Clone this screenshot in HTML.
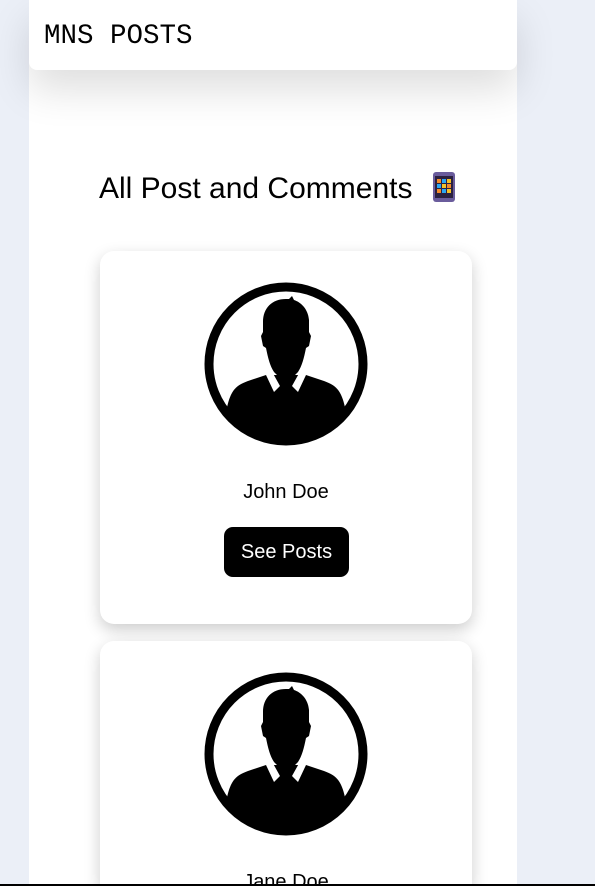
<!DOCTYPE html>
<html><head><meta charset="utf-8"><style>
*{margin:0;padding:0;box-sizing:border-box}
html,body{width:595px;height:886px;overflow:hidden;background:#ebeff7;font-family:"Liberation Sans",sans-serif;position:relative}
.main{position:absolute;left:29px;top:0;width:488px;height:886px;background:#fff}
.hdr{position:absolute;left:29px;top:0;width:488px;height:70px;background:#fff;border-radius:0 0 8px 8px;box-shadow:0 20px 40px rgba(0,0,0,0.13)}
.hdr span{position:absolute;left:15px;top:21px;font-family:"Liberation Mono",monospace;font-size:27.5px;color:#000}
h1{position:absolute;left:99px;top:172px;font-weight:normal;font-size:30px;color:#000;white-space:nowrap}
.card{position:absolute;left:100px;width:372px;height:373px;background:#fff;border-radius:14px;box-shadow:0 6px 16px rgba(0,0,0,0.2);overflow:hidden}
.av{position:absolute;left:104px;top:31px}
.nm{position:absolute;left:0;width:372px;top:230px;text-align:center;font-size:20px}
.btn{position:absolute;left:124px;top:276px;width:125px;height:50px;background:#000;color:#fff;border-radius:9px;font-size:20px;text-align:center;line-height:50px}
.line{position:absolute;left:0;top:884px;width:595px;height:2px;background:#000}
</style></head><body>
<div class="main"></div>
<div class="hdr"><span>MNS POSTS</span></div>
<h1>All Post and Comments <svg width="22" height="30" viewBox="0 0 22 30" style="vertical-align:-4px;margin-left:12px"><rect x="0" y="0" width="22" height="30" rx="3" fill="#6a5c9c"/><rect x="2" y="4" width="18" height="22" fill="#2b2140"/><rect x="4" y="7" width="4" height="4" fill="#f48b2a"/><rect x="9" y="7" width="4" height="4" fill="#2aa6f4"/><rect x="14" y="7" width="4" height="4" fill="#f4c12a"/><rect x="4" y="12" width="4" height="4" fill="#2aa6f4"/><rect x="9" y="12" width="4" height="4" fill="#f4c12a"/><rect x="14" y="12" width="4" height="4" fill="#f48b2a"/><rect x="4" y="17" width="4" height="4" fill="#f48b2a"/><rect x="9" y="17" width="4" height="4" fill="#2aa6f4"/><rect x="14" y="17" width="4" height="4" fill="#f4c12a"/></svg></h1>

<div class="card" style="top:251px">
<svg class="av" width="164" height="164" viewBox="0 0 164 164">
<defs><clipPath id="c1"><circle cx="82" cy="82" r="73"/></clipPath></defs>
<circle cx="82" cy="82" r="77" fill="#fff" stroke="#000" stroke-width="9"/>
<g clip-path="url(#c1)">
<path d="M22 130 C26 110 30 104 44 99 L62 93 L102 93 L120 99 C134 104 138 110 142 130 L150 170 L14 170 Z" fill="#000"/>
<path d="M62 93 L66 86 L76 104 L70 110 Z M102 93 L98 86 L88 104 L94 110 Z" fill="#fff"/>
<path d="M82 17 C68 17 59 26 59 40 L59 50 L57 54 L59 64 L62 66 C64 76 66 84 70 90 L76 96 L82 98 L88 96 L94 90 C98 84 100 76 102 66 L105 64 L107 54 L105 50 L105 38 C104 26 96 20 90 18 L88 14 L85 17 Z" fill="#000"/>
</g>
</svg>
<div class="nm">John Doe</div>
<div class="btn">See Posts</div>
</div>

<div class="card" style="top:641px;height:245px;border-radius:14px 14px 0 0">
<svg class="av" width="164" height="164" viewBox="0 0 164 164">
<defs><clipPath id="c2"><circle cx="82" cy="82" r="73"/></clipPath></defs>
<circle cx="82" cy="82" r="77" fill="#fff" stroke="#000" stroke-width="9"/>
<g clip-path="url(#c2)">
<path d="M22 130 C26 110 30 104 44 99 L62 93 L102 93 L120 99 C134 104 138 110 142 130 L150 170 L14 170 Z" fill="#000"/>
<path d="M62 93 L66 86 L76 104 L70 110 Z M102 93 L98 86 L88 104 L94 110 Z" fill="#fff"/>
<path d="M82 17 C68 17 59 26 59 40 L59 50 L57 54 L59 64 L62 66 C64 76 66 84 70 90 L76 96 L82 98 L88 96 L94 90 C98 84 100 76 102 66 L105 64 L107 54 L105 50 L105 38 C104 26 96 20 90 18 L88 14 L85 17 Z" fill="#000"/>
</g>
</svg>
<div class="nm">Jane Doe</div>
</div>
<div class="line"></div>
</body></html>
